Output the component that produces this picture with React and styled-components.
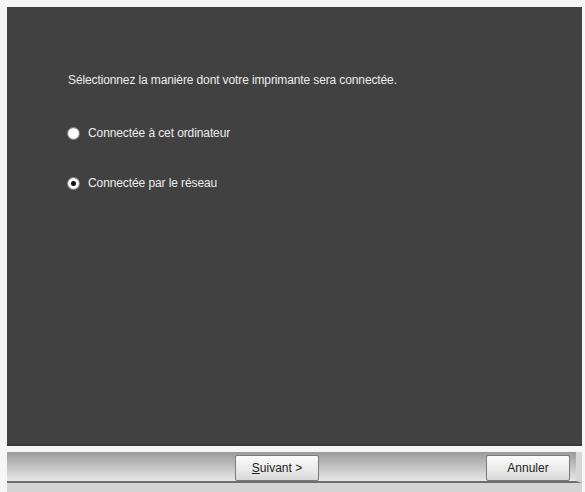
import styled, { createGlobalStyle } from "styled-components";

const Global = createGlobalStyle`
  body {
    margin: 0;
    background: #f6f6f6;
    font-family: Tahoma, "DejaVu Sans", "Liberation Sans", sans-serif;
  }
`;

const Window = styled.div`
  width: 585px;
  height: 492px;
  box-sizing: border-box;
  padding: 7px 3px 0 7px;
  display: flex;
  flex-direction: column;
`;

const Panel = styled.div`
  height: 439px;
  background: #414141;
  box-sizing: border-box;
  padding: 66px 0 0 61px;
  display: flex;
  flex-direction: column;
  border-bottom: 2px solid #383838;
`;

const Prompt = styled.div`
  font-family: "Liberation Sans", Arial, sans-serif;
  font-size: 12px;
  color: #ececec;
  letter-spacing: -0.12px;
  margin-bottom: 39px;
`;

const Options = styled.div`
  display: flex;
  flex-direction: column;
  gap: 36px;
`;

const Option = styled.label`
  display: flex;
  align-items: center;
  gap: 9px;
  font-family: "Liberation Sans", Arial, sans-serif;
  font-size: 12px;
  letter-spacing: -0.1px;
  color: #ececec;
  height: 14px;
`;

const Dot = styled.span`
  width: 11px;
  height: 11px;
  border-radius: 50%;
  background: radial-gradient(circle at 50% 45%, #ffffff 55%, #c8c8c8 100%);
  box-shadow: 0 0 0 1px #8a8a8a;
  display: flex;
  align-items: center;
  justify-content: center;
  &::after {
    content: "";
    width: 5px;
    height: 5px;
    border-radius: 50%;
    background: ${p => (p.$checked ? "#111" : "transparent")};
  }
`;

const Footer = styled.div`
  flex: 1;
  display: flex;
  flex-direction: column;
`;

const Bar = styled.div`
  height: 31px;
  box-sizing: border-box;
  margin-top: 6px;
  background: linear-gradient(#9a9a9a 0%, #b2b2b2 30%, #cacaca 60%, #e6e6e6 100%);
  border-right: 6px solid #d6d6d6;
  border-bottom: 2px solid #6e6e6e;
  display: flex;
  align-items: flex-end;
  justify-content: flex-end;
  padding-right: 6px;
`;

const Button = styled.button`
  width: 84px;
  height: 26px;
  margin-left: ${p => p.$gap || 0}px;
  border: 1px solid #7a7a7a;
  border-radius: 2px;
  background: linear-gradient(#fbfbfb 0%, #ececec 50%, #d9d9d9 100%);
  font-family: "Liberation Sans", Arial, sans-serif;
  font-size: 12px;
  color: #222;
  padding: 0;
  u { text-decoration: underline; }
`;

const Rest = styled.div`
  flex: 1;
  background: #d4d4d4;
`;

export default function App() {
  return (
    <>
      <Global />
      <Window>
        <Panel>
          <Prompt>Sélectionnez la manière dont votre imprimante sera connectée.</Prompt>
          <Options>
            <Option><Dot />Connectée à cet ordinateur</Option>
            <Option><Dot $checked />Connectée par le réseau</Option>
          </Options>
        </Panel>
        <Footer>
          <Bar>
            <Button><u>S</u>uivant &gt;</Button>
            <Button $gap={167}>Annuler</Button>
          </Bar>
          <Rest />
        </Footer>
      </Window>
    </>
  );
}
